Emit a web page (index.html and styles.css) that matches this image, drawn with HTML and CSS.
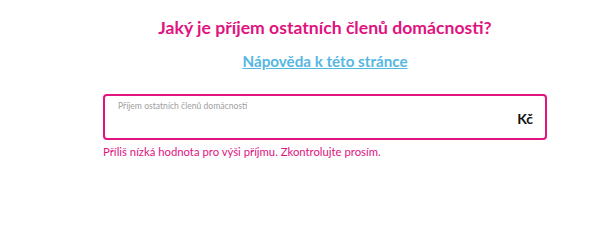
FILE: index.html
```html
<!DOCTYPE html>
<html lang="cs">
<head>
    <meta charset="UTF-8">
    <meta name="viewport" content="width=device-width, initial-scale=1.0">
    <title>Příjem domácnosti</title>
    <link rel="stylesheet" href="styles.css">
</head>
<body>
    <div class="form-step">
        <h1>Jaký je příjem ostatních členů domácnosti?</h1>
        <a href="#" class="help-link">Nápověda k této stránce</a>

        <div class="field field-error">
            <label class="field-label" for="income">Příjem ostatních členů domácnosti</label>
            <input type="text" id="income" class="field-input">
            <span class="field-unit">Kč</span>
        </div>
        <p class="error-msg">Příliš nízká hodnota pro výši příjmu. Zkontrolujte prosím.</p>
    </div>
</body>
</html>
```

FILE: styles.css
```css
body {
    font-family: Lato, "Open Sans", sans-serif;
    background-color: #fff;
    margin: 0;
    padding: 0;
}
.form-step {
    width: 444px;
    margin-left: 103px;
    padding-top: 17px;
    text-align: center;
}
h1 {
    color: #e0137f;
    font-size: 17.6px;
    font-weight: bold;
    line-height: 22px;
    margin: 0 0 12px;
}
.help-link {
    display: inline-block;
    color: #55b7e2;
    font-size: 15.2px;
    font-weight: bold;
    line-height: 18px;
    text-decoration: underline;
}
.field {
    position: relative;
    margin-top: 24px;
    height: 42px;
    border: 2px solid #e0137f;
    border-radius: 4px;
    padding: 0 12px 0 13px;
    text-align: left;
    display: flex;
    align-items: center;
}
.field-label {
    position: absolute;
    left: 13px;
    top: 4px;
    color: #a0a0a0;
    font-size: 8.6px;
    line-height: 12px;
}
.field-input {
    flex: 1;
    border: none;
    outline: none;
    padding: 0;
    font: inherit;
    font-size: 14px;
    height: 20px;
    margin-top: 6px;
    background: transparent;
}
.field-unit {
    font-weight: bold;
    font-size: 14px;
    color: #111;
    margin-top: 2px;
}
.error-msg {
    color: #e0137f;
    font-size: 11.3px;
    line-height: 14px;
    margin: 5px 0 0;
    text-align: left;
}
```
